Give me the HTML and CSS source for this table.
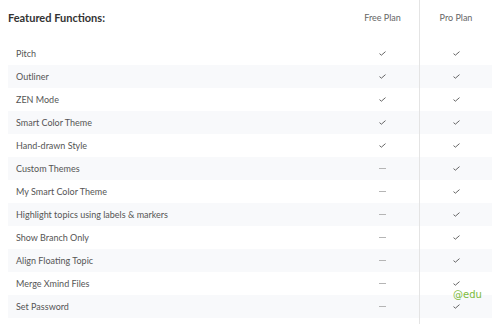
FILE: index.html
```html
<!DOCTYPE html>
<html lang="en">
<head>
    <meta charset="UTF-8">
    <meta name="viewport" content="width=device-width, initial-scale=1.0">
    <title>Featured Functions</title>
    <link rel="stylesheet" href="styles.css">
</head>
<body>
    <div class="compare">
        <div class="row head">
            <div class="feature title">Featured Functions:</div>
            <div class="cell">Free Plan</div>
            <div class="cell pro">Pro Plan</div>
        </div>

        <div class="row">
            <div class="feature">Pitch</div>
            <div class="cell"><svg class="tick" viewBox="0 0 7 5"><path d="M0.5 2.6 L2.4 4.2 L6.5 0.6"/></svg></div>
            <div class="cell pro"><svg class="tick" viewBox="0 0 7 5"><path d="M0.5 2.6 L2.4 4.2 L6.5 0.6"/></svg></div>
        </div>
        <div class="row alt">
            <div class="feature">Outliner</div>
            <div class="cell"><svg class="tick" viewBox="0 0 7 5"><path d="M0.5 2.6 L2.4 4.2 L6.5 0.6"/></svg></div>
            <div class="cell pro"><svg class="tick" viewBox="0 0 7 5"><path d="M0.5 2.6 L2.4 4.2 L6.5 0.6"/></svg></div>
        </div>
        <div class="row">
            <div class="feature">ZEN Mode</div>
            <div class="cell"><svg class="tick" viewBox="0 0 7 5"><path d="M0.5 2.6 L2.4 4.2 L6.5 0.6"/></svg></div>
            <div class="cell pro"><svg class="tick" viewBox="0 0 7 5"><path d="M0.5 2.6 L2.4 4.2 L6.5 0.6"/></svg></div>
        </div>
        <div class="row alt">
            <div class="feature">Smart Color Theme</div>
            <div class="cell"><svg class="tick" viewBox="0 0 7 5"><path d="M0.5 2.6 L2.4 4.2 L6.5 0.6"/></svg></div>
            <div class="cell pro"><svg class="tick" viewBox="0 0 7 5"><path d="M0.5 2.6 L2.4 4.2 L6.5 0.6"/></svg></div>
        </div>
        <div class="row">
            <div class="feature">Hand-drawn Style</div>
            <div class="cell"><svg class="tick" viewBox="0 0 7 5"><path d="M0.5 2.6 L2.4 4.2 L6.5 0.6"/></svg></div>
            <div class="cell pro"><svg class="tick" viewBox="0 0 7 5"><path d="M0.5 2.6 L2.4 4.2 L6.5 0.6"/></svg></div>
        </div>
        <div class="row alt">
            <div class="feature">Custom Themes</div>
            <div class="cell"><span class="dash"></span></div>
            <div class="cell pro"><svg class="tick" viewBox="0 0 7 5"><path d="M0.5 2.6 L2.4 4.2 L6.5 0.6"/></svg></div>
        </div>
        <div class="row">
            <div class="feature">My Smart Color Theme</div>
            <div class="cell"><span class="dash"></span></div>
            <div class="cell pro"><svg class="tick" viewBox="0 0 7 5"><path d="M0.5 2.6 L2.4 4.2 L6.5 0.6"/></svg></div>
        </div>
        <div class="row alt">
            <div class="feature">Highlight topics using labels &amp; markers</div>
            <div class="cell"><span class="dash"></span></div>
            <div class="cell pro"><svg class="tick" viewBox="0 0 7 5"><path d="M0.5 2.6 L2.4 4.2 L6.5 0.6"/></svg></div>
        </div>
        <div class="row">
            <div class="feature">Show Branch Only</div>
            <div class="cell"><span class="dash"></span></div>
            <div class="cell pro"><svg class="tick" viewBox="0 0 7 5"><path d="M0.5 2.6 L2.4 4.2 L6.5 0.6"/></svg></div>
        </div>
        <div class="row alt">
            <div class="feature">Align Floating Topic</div>
            <div class="cell"><span class="dash"></span></div>
            <div class="cell pro"><svg class="tick" viewBox="0 0 7 5"><path d="M0.5 2.6 L2.4 4.2 L6.5 0.6"/></svg></div>
        </div>
        <div class="row">
            <div class="feature">Merge Xmind Files</div>
            <div class="cell"><span class="dash"></span></div>
            <div class="cell pro"><svg class="tick" viewBox="0 0 7 5"><path d="M0.5 2.6 L2.4 4.2 L6.5 0.6"/></svg></div>
        </div>
        <div class="row alt">
            <div class="feature">Set Password</div>
            <div class="cell"><span class="dash"></span></div>
            <div class="cell pro"><svg class="tick" viewBox="0 0 7 5"><path d="M0.5 2.6 L2.4 4.2 L6.5 0.6"/></svg></div>
        </div>
        <div class="row tail">
            <div class="feature"></div>
            <div class="cell"></div>
            <div class="cell pro"></div>
        </div>

        <span class="mark">@edu</span>
    </div>
</body>
</html>
```

FILE: styles.css
```css
body {
    margin: 0;
    padding: 0 8px;
    background-color: white;
    font-family: Lato, "Open Sans", sans-serif;
    color: #555;
}
.compare {
    position: relative;
    width: 484px;
}
.row {
    display: grid;
    grid-template-columns: 338px 73px 73px;
    height: 23px;
    align-items: center;
    font-size: 9px;
}
.row.alt {
    background-color: #f8f9fb;
}
.row.head {
    height: 42px;
}
.row.tail {
    height: 10px;
}
.feature {
    padding-left: 8px;
    height: 100%;
    display: flex;
    align-items: center;
}
.feature.title {
    padding-left: 0;
    padding-bottom: 8px;
    box-sizing: border-box;
    font-size: 11px;
    font-weight: bold;
    color: #333;
}
.head .cell {
    padding-bottom: 8px;
    box-sizing: border-box;
    font-size: 9px;
    color: #666;
}
.cell {
    height: 100%;
    display: flex;
    align-items: center;
    justify-content: center;
}
.cell.pro {
    border-left: 1px solid #e4e4e4;
}
.tick {
    width: 7px;
    height: 5px;
    fill: none;
    stroke: #555;
    stroke-width: 0.9;
}
.dash {
    width: 7px;
    height: 1px;
    background-color: #b5b5b5;
}
.mark {
    position: absolute;
    left: 445px;
    top: 289px;
    font-family: "DejaVu Sans", sans-serif;
    font-size: 10px;
    color: #7cbb3c;
}
```
